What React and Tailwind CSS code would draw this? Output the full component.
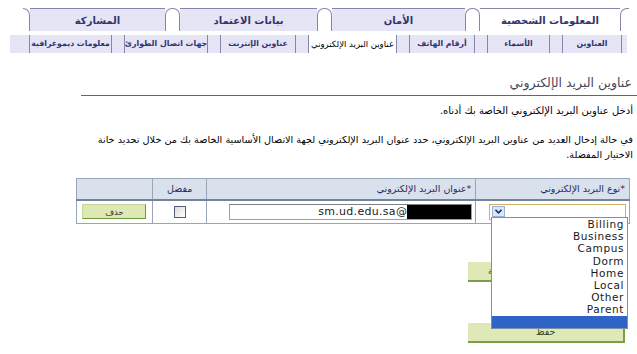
import { useState } from "react"

const topTabs = [
    { label: "المعلومات الشخصية", w: "w-[140px]", active: true },
    { label: "الأمان", w: "w-[133px]" },
    { label: "بيانات الاعتماد", w: "w-[137px]" },
    { label: "المشاركة", w: "w-[135px]" },
]

const subTabs = [
    { label: "العناوين", w: "w-[60px]" },
    { label: "الأسماء", w: "w-[63px]" },
    { label: "أرقام الهاتف", w: "w-[66px]" },
    { label: "عناوين البريد الإلكتروني", w: "w-[89px]", active: true },
    { label: "عناوين الإنترنت", w: "w-[76px]" },
    { label: "جهات اتصال الطوارئ", w: "w-[84px]" },
    { label: "معلومات ديموغرافية", w: "w-[83px]" },
]

const emailTypes = ["Billing", "Business", "Campus", "Dorm", "Home", "Local", "Other", "Parent"]

function TopTabs() {
    return (
        <div className="flex h-[23px] mr-[8px] ml-[23px]">
            <div className="w-[9px] border-l border-t border-[#8686aa] rounded-tl-[7px]" />
            {topTabs.map((t, i) => (
                <div key={t.label} className="flex">
                    <div className={`${t.w} h-full border-t border-[#8686aa] flex items-center justify-center text-[10px] font-bold text-[#33336e] ${t.active ? "bg-white" : "bg-[#e5e5f5]"}`}>
                        {t.label}
                    </div>
                    {i < topTabs.length - 1 && (
                        <div className="w-[15px] h-full border-l border-r border-t border-[#8686aa] rounded-t-[7px] bg-white" />
                    )}
                </div>
            ))}
            <div className="w-[7px] border-r border-t border-[#8686aa] rounded-tr-[7px]" />
        </div>
    )
}

function SubTabs() {
    return (
        <div className="flex h-[18px] mt-[4px] mr-[10px] ml-[10px] bg-[#e5e5f5] px-[5px] gap-[12px]">
            {subTabs.map(t => (
                <div key={t.label} className={`${t.w} shrink-0 h-full border-l border-r border-[#8686aa] flex items-center justify-center whitespace-nowrap ${t.active ? "bg-white text-black text-[8.5px]" : "font-bold text-[7.8px] tracking-[-0.2px] text-[#33336e]"}`}>
                    {t.label}
                </div>
            ))}
        </div>
    )
}

function EmailTable() {
    return (
        <table className="mr-[7px] w-[554px] border-collapse text-[9.5px]">
            <thead>
                <tr className="h-[21px] bg-[#d9e1ec] text-[#1f2b62]">
                    <th className="w-[154px] border border-[#99a5ba] border-b-2 border-b-[#75829c] text-right pr-[4px] font-normal">*نوع البريد الإلكتروني</th>
                    <th className="w-[269px] border border-[#99a5ba] border-b-2 border-b-[#75829c] text-right pr-[4px] font-normal">*عنوان البريد الإلكتروني</th>
                    <th className="w-[55px] border border-[#99a5ba] border-b-2 border-b-[#75829c] text-center font-normal">مفضل</th>
                    <th className="w-[76px] border border-[#99a5ba] border-b-2 border-b-[#75829c]"></th>
                </tr>
            </thead>
            <tbody>
                <tr className="h-[24px]">
                    <td className="border border-[#99a5ba] pr-[3px]">
                        <div className="w-[137px] h-[16px] border border-[#cfae6a] bg-white flex items-center pl-[2px]" dir="ltr">
                            <div className="w-[13px] h-[11px] bg-[#dbe5f4] border border-[#9db0cf] flex items-center justify-center">
                                <svg width="7" height="5" viewBox="0 0 7 5"><path d="M0.5 0.8 L3.5 3.8 L6.5 0.8" fill="none" stroke="#1f3470" strokeWidth="1.6" /></svg>
                            </div>
                        </div>
                    </td>
                    <td className="border border-[#99a5ba] pr-[3px]">
                        <div className="w-[243px] h-[16px] border border-[#a0a0a0] border-t-[#808080] flex justify-end items-stretch" dir="ltr">
                            <span className="text-[11px] leading-[14px] tracking-[0.3px] text-[#222] font-['DejaVu_Sans']">sm.ud.edu.sa@</span>
                            <span className="w-[64px] bg-black" />
                        </div>
                    </td>
                    <td className="border border-[#99a5ba]">
                        <div className="mx-auto w-[12px] h-[12px] border border-[#4f5d78] bg-gradient-to-br from-[#dcdcdc] to-white" />
                    </td>
                    <td className="border border-[#99a5ba]">
                        <button className="mx-auto block w-[64px] h-[15px] bg-[#dde8b4] border border-[#c7d69a] border-r-[#6f9a3a] border-b-[#6f9a3a] text-[8.5px] leading-[12px] text-[#333]">حذف</button>
                    </td>
                </tr>
            </tbody>
        </table>
    )
}

export default function App() {
    const [types] = useState(emailTypes)
    return (
        <div dir="rtl" className="relative w-[637px] h-[354px] overflow-hidden bg-white font-['DejaVu_Sans',sans-serif] text-black">
            <div className="pt-[8px]">
                <TopTabs />
                <SubTabs />
            </div>

            {/* page title */}
            <div className="mt-[21px] ml-[81px] border-b border-[#5a6684] pb-[4px]">
                <h1 className="pr-[5px] text-[12.5px] leading-[17px] tracking-[0.8px] text-[#4a4a5c]">عناوين البريد الإلكتروني</h1>
            </div>

            <p className="mt-[8px] pr-[4px] text-[10px] leading-[13px]">أدخل عناوين البريد الإلكتروني الخاصة بك أدناه.</p>
            <p className="mt-[15px] pr-[4px] text-[9.7px] leading-[15px] whitespace-nowrap">
                في حالة إدخال العديد من عناوين البريد الإلكتروني، حدد عنوان البريد الإلكتروني لجهة الاتصال الأساسية الخاصة بك من خلال تحديد خانة
                <br />
                الاختيار المفضلة.
            </p>

            <div className="mt-[16px]">
                <EmailTable />
            </div>

            <button className="block mt-[38px] mr-[12px] w-[157px] h-[20px] bg-[#dfe8b7] border-r-2 border-b-2 border-[#7a9e48] text-[9.5px] text-[#3a4a20] overflow-hidden">
                <span className="block pr-[40px] text-left pl-[20px]">إضافة</span>
            </button>
            <button className="block mt-[41px] mr-[12px] w-[157px] h-[20px] bg-[#dfe8b7] border-r-2 border-b-2 border-[#7a9e48] text-[9.5px] text-[#3a4a20]">حفظ</button>

            {/* open select list */}
            <div dir="ltr" className="absolute left-[491px] top-[217px] w-[137px] bg-white border border-[#7f8fa8] text-right font-['DejaVu_Sans',sans-serif] text-[10.5px] tracking-[0.6px] text-[#1a1a1a]">
                {types.map(t => (
                    <div key={t} className="h-[12.2px] leading-[12.2px] pr-[3px]">{t}</div>
                ))}
                <div className="h-[12px] bg-[#2f64c6]" />
            </div>
        </div>
    )
}
